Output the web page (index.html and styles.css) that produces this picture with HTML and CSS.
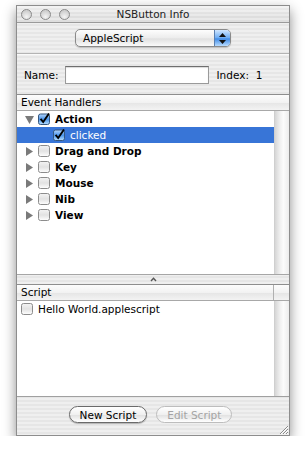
FILE: index.html
```html
<!DOCTYPE html>
<html lang="en">
<head>
    <meta charset="UTF-8">
    <meta name="viewport" content="width=device-width, initial-scale=1.0">
    <title>NSButton Info</title>
    <link rel="stylesheet" href="styles.css">
</head>
<body>
    <div class="window">
        <div class="titlebar">
            <div class="lights">
                <span class="light"></span>
                <span class="light"></span>
                <span class="light"></span>
            </div>
            <div class="title">NSButton Info</div>
            <div></div>
        </div>

        <div class="toolbar">
            <div class="popup">
                <span class="popup-label">AppleScript</span>
                <span class="popup-cap">
                    <svg width="7" height="11" viewBox="0 0 7 11"><polygon points="3.5,0 7,4 0,4" fill="#111"/><polygon points="0,7 7,7 3.5,11" fill="#111"/></svg>
                </span>
            </div>
        </div>

        <div class="name-row">
            <label class="name-label">Name:</label>
            <div class="field"></div>
            <span class="index">Index:&nbsp; 1</span>
        </div>

        <div class="table handlers">
            <div class="header">
                <div class="col">Event Handlers</div>
            </div>
            <div class="body">
                <div class="list">
                    <div class="row group">
                        <svg class="tri" width="9" height="9" viewBox="0 0 9 9"><polygon points="0,1 9,1 4.5,9" fill="#7a7a7a"/></svg>
                        <svg class="box" width="12" height="12" viewBox="0 0 12 12"><use href="#checked"/></svg>
                        <span>Action</span>
                    </div>
                    <div class="row child selected">
                        <svg class="box" width="12" height="12" viewBox="0 0 12 12"><use href="#checked"/></svg>
                        <span>clicked</span>
                    </div>
                    <div class="row group">
                        <svg class="tri" width="9" height="9" viewBox="0 0 9 9"><polygon points="1,0 8,4.5 1,9" fill="#7a7a7a"/></svg>
                        <svg class="box" width="12" height="12" viewBox="0 0 12 12"><use href="#unchecked"/></svg>
                        <span>Drag and Drop</span>
                    </div>
                    <div class="row group">
                        <svg class="tri" width="9" height="9" viewBox="0 0 9 9"><polygon points="1,0 8,4.5 1,9" fill="#7a7a7a"/></svg>
                        <svg class="box" width="12" height="12" viewBox="0 0 12 12"><use href="#unchecked"/></svg>
                        <span>Key</span>
                    </div>
                    <div class="row group">
                        <svg class="tri" width="9" height="9" viewBox="0 0 9 9"><polygon points="1,0 8,4.5 1,9" fill="#7a7a7a"/></svg>
                        <svg class="box" width="12" height="12" viewBox="0 0 12 12"><use href="#unchecked"/></svg>
                        <span>Mouse</span>
                    </div>
                    <div class="row group">
                        <svg class="tri" width="9" height="9" viewBox="0 0 9 9"><polygon points="1,0 8,4.5 1,9" fill="#7a7a7a"/></svg>
                        <svg class="box" width="12" height="12" viewBox="0 0 12 12"><use href="#unchecked"/></svg>
                        <span>Nib</span>
                    </div>
                    <div class="row group">
                        <svg class="tri" width="9" height="9" viewBox="0 0 9 9"><polygon points="1,0 8,4.5 1,9" fill="#7a7a7a"/></svg>
                        <svg class="box" width="12" height="12" viewBox="0 0 12 12"><use href="#unchecked"/></svg>
                        <span>View</span>
                    </div>
                </div>
                <div class="scroller"></div>
            </div>
        </div>

        <div class="splitter">
            <svg width="7" height="5" viewBox="0 0 7 5"><path d="M1 4 L3.5 1.2 L6 4" fill="none" stroke="#555" stroke-width="1.4"/></svg>
        </div>

        <div class="table scripts">
            <div class="header">
                <div class="col">Script</div>
                <div class="corner"></div>
            </div>
            <div class="body">
                <div class="list">
                    <div class="row file">
                        <svg class="box" width="12" height="12" viewBox="0 0 12 12"><use href="#unchecked"/></svg>
                        <span>Hello World.applescript</span>
                    </div>
                </div>
                <div class="scroller"></div>
            </div>
        </div>

        <div class="footer">
            <button class="button">New Script</button>
            <button class="button disabled">Edit Script</button>
            <svg class="grip" width="11" height="11" viewBox="0 0 11 11">
                <path d="M10 2 L2 10 M10 5 L5 10 M10 8 L8 10" stroke="#8a8a8a" stroke-width="1"/>
                <path d="M10 3 L3 10 M10 6 L6 10 M10 9 L9 10" stroke="#fff" stroke-width="1"/>
            </svg>
        </div>
    </div>

    <svg width="0" height="0" class="defs">
        <defs>
            <linearGradient id="plain" x1="0" y1="0" x2="0" y2="1">
                <stop offset="0" stop-color="#f4f4f4"/>
                <stop offset="0.5" stop-color="#e2e2e2"/>
                <stop offset="1" stop-color="#ffffff"/>
            </linearGradient>
            <linearGradient id="aqua" x1="0" y1="0" x2="0" y2="1">
                <stop offset="0" stop-color="#b5d6fb"/>
                <stop offset="0.5" stop-color="#4a94ea"/>
                <stop offset="1" stop-color="#b9e0ff"/>
            </linearGradient>
            <g id="unchecked">
                <rect x="0.5" y="0.5" width="11" height="11" rx="2" fill="url(#plain)" stroke="#8c8c8c"/>
            </g>
            <g id="checked">
                <rect x="0.5" y="1" width="11" height="10.5" rx="2" fill="url(#aqua)" stroke="#35577f"/>
                <path d="M2.6 5.8 L5.2 9 L11 0.5" fill="none" stroke="#000" stroke-width="1.9"/>
            </g>
        </defs>
    </svg>
</body>
</html>
```

FILE: styles.css
```css
body {
    margin: 0;
    padding: 5px 0 0 16px;
    background: #fff;
    font-family: "DejaVu Sans", "Liberation Sans", sans-serif;
    font-size: 10.5px;
    color: #000;
}

.defs {
    position: absolute;
}

.window {
    width: 272px;
    border: 1px solid #8d8d8d;
    box-shadow: 0 5px 12px rgba(0, 0, 0, 0.45);
    background: repeating-linear-gradient(#efefef 0 2px, #e6e6e6 2px 4px);
}

/* title bar */

.titlebar {
    display: grid;
    grid-template-columns: 1fr auto 1fr;
    align-items: center;
    height: 16px;
    border-bottom: 1px solid #9a9a9a;
    background: linear-gradient(rgba(255, 255, 255, 0.5), rgba(255, 255, 255, 0) 60%), repeating-linear-gradient(#e9e9e9 0 2px, #dedede 2px 4px);
}

.lights {
    display: flex;
    gap: 8px;
    padding-left: 4px;
}

.light {
    width: 9px;
    height: 9px;
    border-radius: 50%;
    border: 1px solid #8a8a8a;
    background: radial-gradient(circle at 50% 75%, #f4f4f4, #cfcfcf 70%);
}

.title {
    color: #222;
}

/* popup */

.toolbar {
    height: 30px;
    border-bottom: 1px solid #b4b4b4;
    display: flex;
    justify-content: center;
    align-items: flex-start;
}

.popup {
    margin-top: 6px;
    width: 154px;
    height: 16px;
    border: 1px solid #8a8a8a;
    border-radius: 5px;
    display: flex;
    overflow: hidden;
    background: linear-gradient(#fdfdfd, #ececec 50%, #e0e0e0 55%, #fafafa);
    box-shadow: 0 1px 1px rgba(0, 0, 0, 0.2);
}

.popup-label {
    flex: 1;
    padding-left: 7px;
    line-height: 16px;
}

.popup-cap {
    width: 15px;
    border-left: 1px solid #5a7fb0;
    display: flex;
    align-items: center;
    justify-content: center;
    background: linear-gradient(#d0e6ff, #6aaaf2 50%, #3f8ae6 55%, #b8dcff);
}

/* name row */

.name-row {
    height: 39px;
    display: flex;
    align-items: center;
    padding-left: 7px;
    border-top: 1px solid #fafafa;
}

.name-label {
    margin-right: 6px;
}

.field {
    width: 142px;
    height: 16px;
    border: 1px solid #9a9a9a;
    border-top-color: #6e6e6e;
    background: #fff;
    box-shadow: inset 0 1px 1px rgba(0, 0, 0, 0.15);
}

.index {
    margin-left: 8px;
}

/* tables */

.table {
    border-top: 1px solid #8e8e8e;
}

.header {
    display: flex;
    height: 15px;
    border-bottom: 1px solid #a8a8a8;
    background: linear-gradient(#fdfdfd, #f2f2f2 50%, #e6e6e6 55%, #f3f3f3);
}

.header .col {
    flex: 1;
    padding-left: 4px;
    line-height: 15px;
}

.scripts .header .col {
    border-right: 1px solid #b0b0b0;
}

.header .corner {
    width: 15px;
}

.body {
    display: flex;
    background: #fff;
}

.handlers .body {
    height: 163px;
}

.scripts .body {
    height: 95px;
}

.list {
    flex: 1;
}

.scroller {
    width: 14px;
    border-left: 1px solid #cfcfcf;
    background: linear-gradient(to right, #d6d6d6, #efefef 35%, #fbfbfb 60%, #ececec);
}

.row {
    height: 16px;
    display: flex;
    align-items: center;
}

.row.group {
    padding-left: 8px;
    font-weight: bold;
}

.row.child {
    padding-left: 36px;
}

.row.file {
    padding-left: 4px;
}

.tri {
    margin-right: 4px;
}

.box {
    margin-right: 5px;
    flex: none;
}

.row.selected {
    background: #3875d7;
    color: #fff;
}

/* splitter */

.splitter {
    height: 9px;
    border-top: 1px solid #a6a6a6;
    display: flex;
    justify-content: center;
    align-items: center;
}

/* footer */

.footer {
    position: relative;
    height: 38px;
    border-top: 1px solid #a0a0a0;
    display: flex;
    justify-content: center;
    align-items: flex-start;
    gap: 9px;
    padding-right: 5px;
}

.button {
    margin-top: 9px;
    height: 17px;
    padding: 0 10px;
    border: 1px solid #6a6a6a;
    border-radius: 9px;
    font-family: inherit;
    font-size: 10.5px;
    color: #000;
    background: linear-gradient(#ffffff, #f0f0f0 50%, #e2e2e2 55%, #ffffff);
    box-shadow: 0 1px 1px rgba(0, 0, 0, 0.25);
}

.button.disabled {
    color: #a4a4a4;
    border-color: #bdbdbd;
    box-shadow: none;
}

.grip {
    position: absolute;
    right: 0;
    bottom: 0;
}
```
